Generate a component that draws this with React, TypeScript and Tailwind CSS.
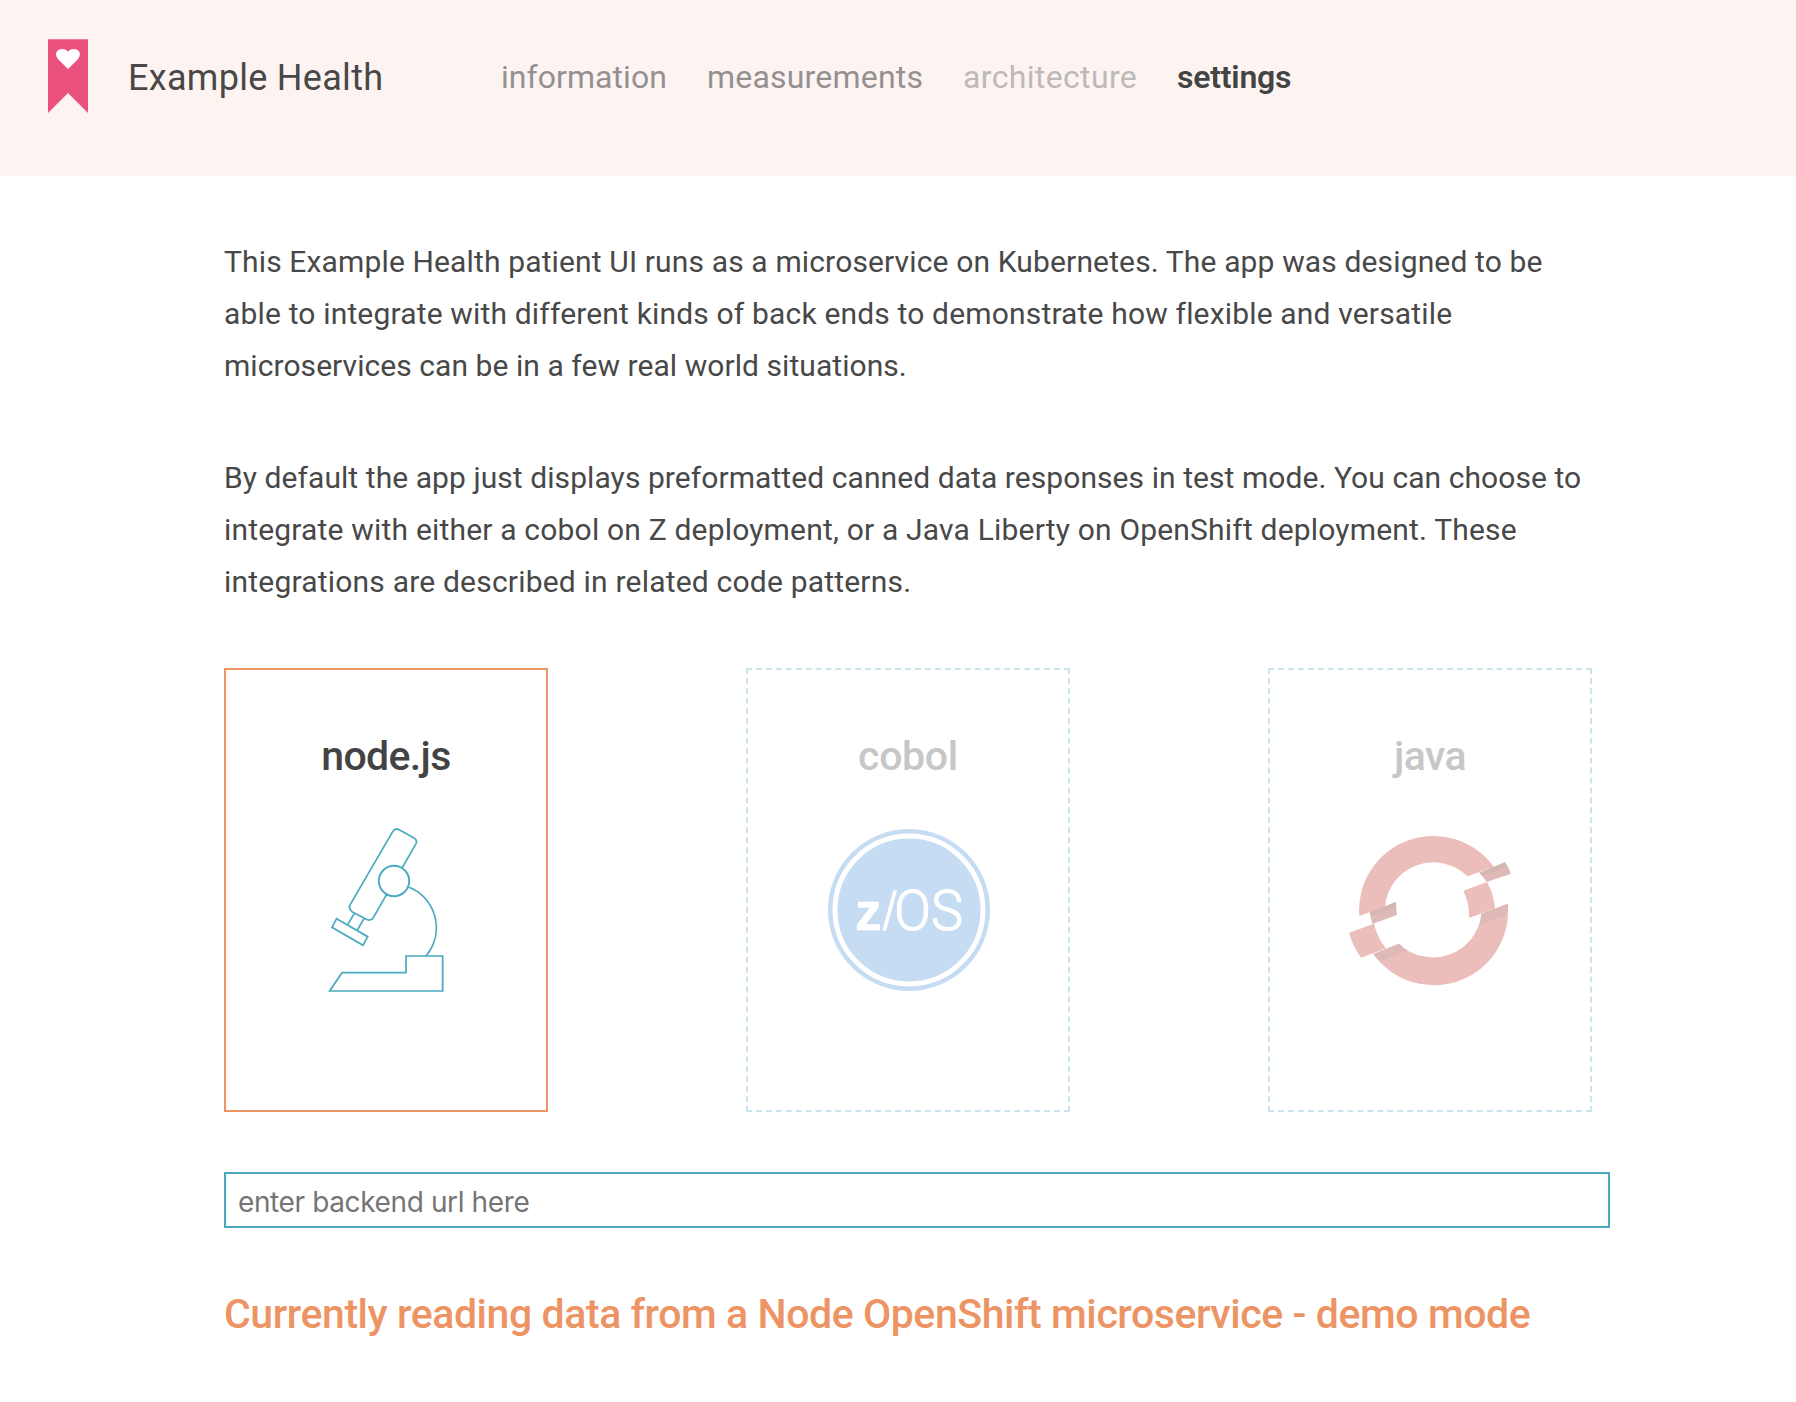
import React from "react";

function Bookmark() {
  return (
    <svg className="mt-[39px] h-[74px] w-10 shrink-0" viewBox="0 0 40 74">
      <path d="M0 0.3H40V74L20 54L0 74Z" fill="#eb517d" />
      <path
        d="M20 30L10.2 20.2C6 15.5 8.5 10 14 10C17 10 19 11.3 20 12.8C21 11.3 23 10 26 10C31.500 10 34 15.500 29.800 20.200Z"
        fill="#fff"
      />
    </svg>
  );
}

function Microscope() {
  return (
    <svg
      className="h-[164px] w-[200px]"
      viewBox="228 534 600 492"
      fill="none"
      stroke="#4aaac0"
      strokeWidth="5.2"
    >
      <path d="M575 656L617 583Q624 571 612 564L569 540Q556 532 548 545L421 763Q414 776 426 785L469 808Q482 815 490 803L530 733" />
      <circle cx="552" cy="693" r="45.500" strokeWidth="5.800" />
      <path d="M433 790L413 824M462 806L442 840" />
      <path d="M380 806L473 860L459 886L366 832Z" />
      <path d="M595 711C672 738 710 842 648 918" />
      <path d="M588 918H698V1023H359L396 968H588Z" />
    </svg>
  );
}

function ZosBadge() {
  return (
    <svg className="h-[164px] w-[200px]" viewBox="219 534 600 492">
      <circle cx="522" cy="780" r="243" fill="#c5dcf2" />
      <circle cx="522" cy="780" r="222" fill="none" stroke="#fff" strokeWidth="15" />
      <g fill="#fff">
        <text
          x="360"
          y="839"
          fontSize="162"
          textLength="80"
          lengthAdjust="spacingAndGlyphs"
          stroke="#fff"
          strokeWidth="1.5"
          className="font-['Liberation_Sans',sans-serif] font-bold"
        >
          z
        </text>
        <text
          x="441"
          y="840"
          fontSize="166"
          stroke="#c5dcf2"
          strokeWidth="1.5"
          className="font-['Liberation_Sans',sans-serif]"
        >
          /
        </text>
        <text
          x="478"
          y="839"
          fontSize="166"
          textLength="206"
          lengthAdjust="spacingAndGlyphs"
          stroke="#fff"
          strokeWidth="3.500"
          className="font-[Roboto,sans-serif] font-light"
        >
          OS
        </text>
      </g>
    </svg>
  );
}

function OpenShiftLogo() {
  return (
    <svg className="h-[164px] w-[200px]" viewBox="225 534 600 492">
      <g fill="#ebbdbb">
        <path d="M313 798A223 223 0 0 1 716 650L638 679A146 146 0 0 0 390 770Z" />
        <path d="M758 761A222.500 222.500 0 0 1 355 912L432 881A146 146 0 0 0 679 791Z" />
        <path d="M625 722L696 696Q716 732 720 775L642 804Q644 760 625 722Z" />
        <path d="M282 848L357 821Q366 862 393 895L318 923Q293 888 282 848Z" />
      </g>
      <g fill="#dfb9b7">
        <path d="M673 668L750 637Q761 653 768 671L695 696Q686 681 673 668Z" />
        <path d="M345 787L423 756Q423 776 426 795L352 822Q347 805 345 787Z" />
        <path d="M679 791L758 761Q759 778 757 794L674 824Q678 808 679 791Z" />
        <path d="M355 912L432 881Q444 894 458 903L376 934Q364 924 355 912Z" />
      </g>
      <g fill="#d3b6b4">
        <path d="M673 668L750 637L758 651L682 678Z" />
        <path d="M345 787L423 756V771L347 799Z" />
      </g>
    </svg>
  );
}

interface CardProps {
  frame: string;
  title: string;
  titleClass: string;
  children: React.ReactNode;
}

function Card({ frame, title, titleClass, children }: CardProps) {
  return (
    <div className={`flex h-[444px] w-[324px] flex-col items-center border-2 pt-[58px] ${frame}`}>
      <h2 className={`mb-11 text-[41px] leading-[56px] font-medium ${titleClass}`}>{title}</h2>
      {children}
    </div>
  );
}

export default function App() {
  return (
    <div className="min-h-[1402px] w-[1796px] bg-white font-[Roboto,sans-serif] text-[#484848]">
      <header className="flex h-44 items-start bg-[#fdf4f2] pl-12">
        <Bookmark />
        <div className="mt-14 ml-10 w-[373px] text-[36px] leading-[44px] tracking-[0.3px]">Example Health</div>
        <nav className="mt-[57px] flex text-[32px] leading-10 whitespace-nowrap text-[#949090]">
          <a className="w-[206px] tracking-[0.06px]">information</a>
          <a className="w-[256px] tracking-[0.2px]">measurements</a>
          <a className="w-[214px] tracking-[0.35px] text-[#bdb9b8]">architecture</a>
          <a className="font-semibold tracking-[-0.22px] text-[#434343]">settings</a>
        </nav>
      </header>

      <main className="pt-[60px] pl-56">
        <p className="mb-[60px] text-[30px] leading-[52px] whitespace-nowrap">
          <span className="block tracking-[0.14px]">
            This Example Health patient UI runs as a microservice on Kubernetes. The app was designed to be
          </span>
          <span className="block tracking-[0.165px]">
            able to integrate with different kinds of back ends to demonstrate how flexible and versatile
          </span>
          <span className="block tracking-[0.06px]">microservices can be in a few real world situations.</span>
        </p>
        <p className="mb-[60px] text-[30px] leading-[52px] whitespace-nowrap">
          <span className="block tracking-[0.07px]">
            By default the app just displays preformatted canned data responses in test mode. You can choose to
          </span>
          <span className="block tracking-[0.185px]">
            integrate with either a cobol on Z deployment, or a Java Liberty on OpenShift deployment. These
          </span>
          <span className="block tracking-[0.2px]">integrations are described in related code patterns.</span>
        </p>

        <div className="mb-[60px] flex gap-[198px]">
          <Card frame="border-[#ec9464]" title="node.js" titleClass="tracking-[-0.65px] text-[#434343]">
            <Microscope />
          </Card>
          <Card frame="border-dashed border-[#c9e5eb]" title="cobol" titleClass="tracking-[-0.3px] text-[#c7c7c7]">
            <ZosBadge />
          </Card>
          <Card frame="border-dashed border-[#c9e5eb]" title="java" titleClass="tracking-[-0.5px] text-[#c7c7c7]">
            <OpenShiftLogo />
          </Card>
        </div>

        <input
          type="text"
          placeholder="enter backend url here"
          className="block h-14 w-[1386px] border-2 border-[#4aa9bf] pt-1 pl-3 font-[Inter,sans-serif] text-[28px] tracking-[-0.38px] outline-none placeholder:text-[#757575]"
        />
        <h2 className="mt-[58px] text-[41px] leading-[56px] font-medium tracking-[-0.43px] whitespace-nowrap text-[#ec9464]">
          Currently reading data from a Node OpenShift microservice - demo mode
        </h2>
      </main>
    </div>
  );
}
